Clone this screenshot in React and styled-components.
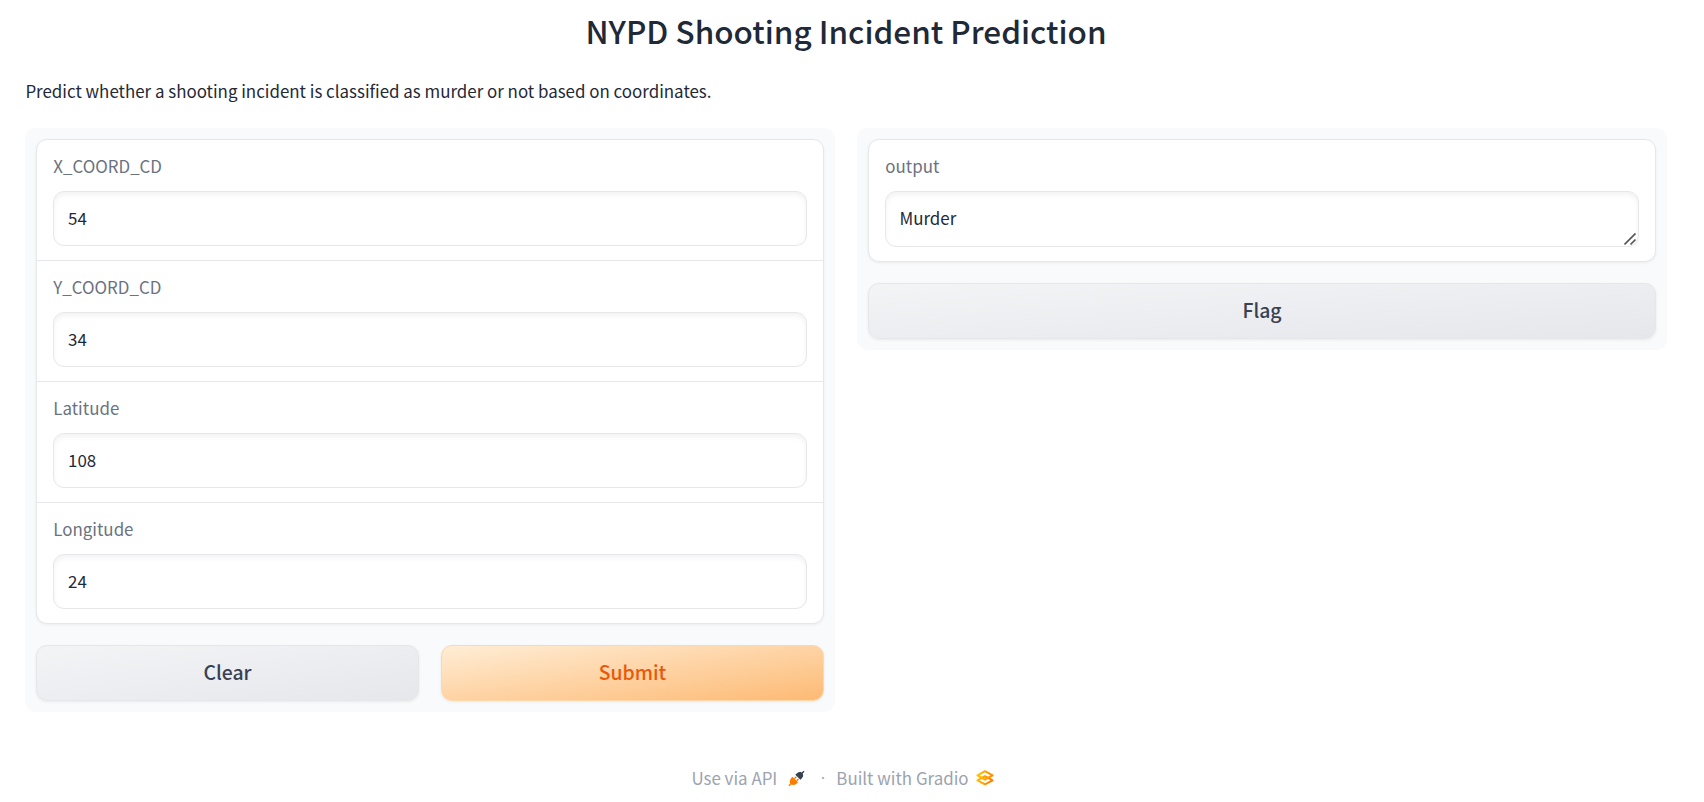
import React from "react";
import styled, { createGlobalStyle } from "styled-components";

const GlobalStyle = createGlobalStyle`
  *, *::before, *::after { box-sizing: border-box; }
  body {
    margin: 0;
    background: #fff;
    color: #1f2937;
    font-family: "Noto Sans CJK SC", "Noto Sans", sans-serif;
    font-size: 16.92px;
    line-height: 26px;
  }
`;

const Page = styled.main`
  padding: 8px 37px 0 25px;
`;

const Title = styled.h1`
  margin: 0;
  font-size: 31.5px;
  font-weight: 500;
  line-height: 44px;
  text-align: center;
`;

const Description = styled.p`
  margin: 26px 0 24px;
  padding-left: 0.4px;
`;

const Columns = styled.div`
  display: grid;
  grid-template-columns: 1fr 1fr;
  align-items: start;
  gap: 22px;
`;

const Panel = styled.section`
  display: flex;
  flex-direction: column;
  gap: 21px;
  padding: 11px;
  border-radius: 11px;
  background: #f9fafb;
`;

const Card = styled.div`
  border: 1px solid #e5e7eb;
  border-radius: 11px;
  background: #fff;
  box-shadow: 0 1px 3px rgba(0, 0, 0, 0.06);
`;

const Field = styled.label`
  display: flex;
  flex-direction: column;
  gap: 12px;
  padding: 13px 16px 14px;
  color: #6b7280;

  & + & {
    border-top: 1px solid #e5e7eb;
  }
`;

const FieldName = styled.span`
  padding-left: 0.3px;
`;

const controlStyles = `
  display: block;
  width: 100%;
  padding: 0 14px 2px;
  border: 1px solid #e5e7eb;
  border-radius: 11px;
  outline: none;
  background: #fff;
  box-shadow: inset 0 3px 5px rgba(0, 0, 0, 0.05);
  color: #1f2937;
  font: inherit;
`;

const Input = styled.input`
  ${controlStyles}
  height: 55px;
`;

const OutputWrap = styled.div`
  position: relative;
`;

const Output = styled.textarea`
  ${controlStyles}
  height: 56px;
  padding: 13px 13.5px 0;
  overflow: hidden;
  resize: none;
`;

const ResizeGrip = styled.svg`
  position: absolute;
  right: 2px;
  bottom: 1px;
`;

const Actions = styled.div`
  display: flex;
  gap: 22px;
`;

const Button = styled.button`
  flex: 1;
  height: 56px;
  padding: 0 0 2px;
  border: 1px solid ${(p) => (p.$primary ? "#fed7aa" : "#e5e7eb")};
  border-radius: 11px;
  background: ${(p) =>
    p.$primary
      ? "linear-gradient(to bottom right, #ffedd5, #fdba74)"
      : "linear-gradient(to bottom right, #f3f4f6, #e5e7eb)"};
  box-shadow: 0 1px 3px rgba(0, 0, 0, 0.07);
  color: ${(p) => (p.$primary ? "#ea580c" : "#374151")};
  font: 500 19.4px/28px "Noto Sans CJK SC", "Noto Sans", sans-serif;
`;

const Footer = styled.footer`
  display: flex;
  align-items: center;
  justify-content: center;
  margin-top: 53px;
  padding-right: 7px;
  color: #9ca3af;
`;

const FooterItem = styled.span`
  display: flex;
  align-items: center;
`;

const FooterIcon = styled.svg`
  margin-left: ${(p) => p.$gap}px;
`;

const Dot = styled.span`
  margin: 0 11px 0 15.5px;
  font-family: "Open Sans", "Noto Sans", sans-serif;
`;

const inputs = [
  ["X_COORD_CD", "54"],
  ["Y_COORD_CD", "34"],
  ["Latitude", "108"],
  ["Longitude", "24"],
];

const PlugIcon = () => (
  <FooterIcon $gap={11} width="17" height="17" viewBox="0 0 17 17">
    <g fill="#ff7c00">
      <path d="M4.4 6.7 10 12.2 8.2 13.9C6.6 15.3 4.6 15.2 3.3 14.5L1.4 16.3.4 15.3 2.3 13.4C1.5 12 1.6 10 2.9 8.4Z" />
      <path d="m5.9 8.2 1.9-1.9 1 1-1.9 1.9zM8.1 10.3 10 8.4l1 1-1.9 1.9z" />
    </g>
    <path
      fill="#374151"
      d="M7.3 4.8 9 3.2C10.5 1.8 12.4 1.8 13.7 2.5L15.5.7l1 1-1.8 1.8C15.5 5 15.3 6.8 13.9 8.2L12.4 9.7Z"
    />
  </FooterIcon>
);

const GradioIcon = () => (
  <FooterIcon $gap={7} width="18" height="17" viewBox="0 0 18 17">
    <defs>
      <linearGradient id="gradioTop" x1="0" y1="0" x2="1" y2="0">
        <stop stopColor="#ffc300" />
        <stop offset="1" stopColor="#ff8a00" />
      </linearGradient>
      <linearGradient id="gradioBottom" x1="0" y1="0" x2="1" y2="0">
        <stop stopColor="#ffb800" />
        <stop offset="1" stopColor="#ff7c00" />
      </linearGradient>
    </defs>
    <g fill="none" strokeWidth="2.1" strokeLinejoin="round" strokeLinecap="round">
      <path stroke="url(#gradioBottom)" d="M4.9 8.4 1.5 10.4 9 14.4 16.5 10.4 13.1 8.4 9 6.3 4.9 8.4" />
      <path stroke="url(#gradioTop)" d="M9 1.2 16.5 5.4 9 9.6 1.5 5.4Z" />
    </g>
  </FooterIcon>
);

export default function App() {
  return (
    <Page>
      <GlobalStyle />
      <Title>NYPD Shooting Incident Prediction</Title>
      <Description>
        Predict whether a shooting incident is classified as murder or not based on coordinates.
      </Description>
      <Columns>
        <Panel>
          <Card>
            {inputs.map(([label, value]) => (
              <Field key={label}>
                <FieldName>{label}</FieldName>
                <Input defaultValue={value} />
              </Field>
            ))}
          </Card>
          <Actions>
            <Button>Clear</Button>
            <Button $primary>Submit</Button>
          </Actions>
        </Panel>
        <Panel>
          <Card>
            <Field>
              <FieldName>output</FieldName>
              <OutputWrap>
                <Output readOnly rows={1} value="Murder" />
                <ResizeGrip width="13" height="13" viewBox="0 0 13 13">
                  <path d="M.5 11.5 11.5.5M6.5 11.5l5-5" stroke="#555" strokeWidth="1.7" />
                </ResizeGrip>
              </OutputWrap>
            </Field>
          </Card>
          <Actions>
            <Button>Flag</Button>
          </Actions>
        </Panel>
      </Columns>
      <Footer>
        <FooterItem>
          Use via API
          <PlugIcon />
        </FooterItem>
        <Dot>·</Dot>
        <FooterItem>
          Built with Gradio
          <GradioIcon />
        </FooterItem>
      </Footer>
    </Page>
  );
}
